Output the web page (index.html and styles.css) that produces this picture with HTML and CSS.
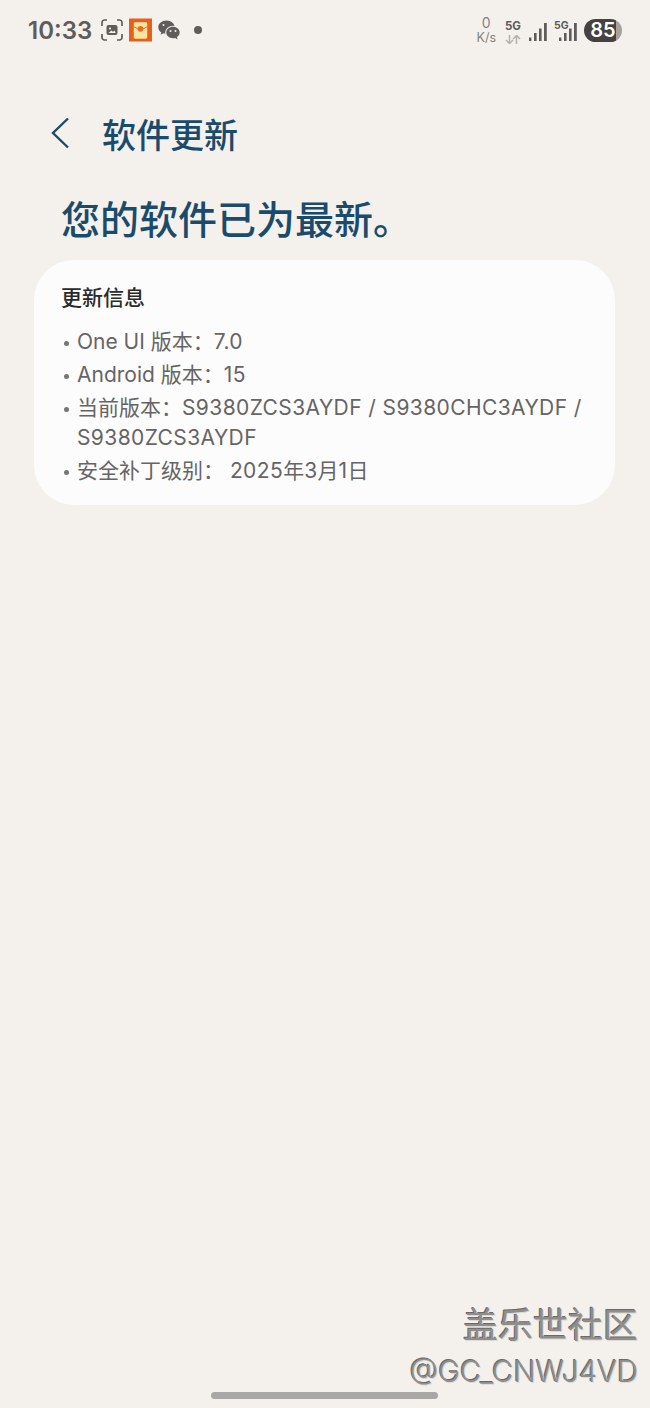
FILE: index.html
```html
<!DOCTYPE html>
<html lang="zh-CN">
<head>
    <meta charset="UTF-8">
    <meta name="viewport" content="width=device-width, initial-scale=1.0">
    <title>软件更新</title>
    <link rel="stylesheet" href="styles.css">
</head>
<body>
    <div class="status-bar">
        <span class="clock">10:33</span>
        <svg class="icon-shot" viewBox="0 0 22 22" width="22" height="22">
            <path d="M1 7V3.500A2.500 2.500 0 0 1 3.500 1H6M16 1h2.500A2.500 2.500 0 0 1 21 3.500V7M21 15v3.500a2.500 2.500 0 0 1-2.500 2.500H16M6 21H3.500A2.500 2.500 0 0 1 1 18.500V15" fill="none" stroke="#5f5c5a" stroke-width="1.700"/>
            <rect x="5.500" y="6" width="11" height="10" rx="2" fill="#5f5c5a"/>
            <circle cx="9" cy="9.500" r="1.100" fill="#f4f1ed"/>
            <path d="M7.500 14l2.800-2.600 1.700 1.400 1.500-1.200 1.200 2.400z" fill="#f4f1ed"/>
        </svg>
        <svg class="icon-packet" viewBox="0 0 24 24" width="23" height="24">
            <rect width="24" height="24" fill="#e4611c"/>
            <rect x="5" y="4" width="14" height="17" rx="1.500" fill="#fbe4a0"/>
            <path d="M5 8.500l7 4 7-4" fill="none" stroke="#d9672a" stroke-width="1"/>
            <circle cx="12" cy="10.800" r="3" fill="#e0702c"/>
        </svg>
        <svg class="icon-chat" viewBox="0 0 22 20" width="22" height="20">
            <path d="M8.500 0.500C3.900 0.500 0.300 3.500 0.300 7.200c0 2.100 1.200 4 3 5.200l-0.700 2.400 2.900-1.500c1 .3 2 .4 3 .4 4.600 0 8.200-3 8.200-6.500S13.100 0.500 8.500 0.500z" fill="#5f5c5a"/>
            <ellipse cx="15" cy="12.500" rx="7.800" ry="6.800" fill="#f4f1ed"/>
            <path d="M15 6.800c-3.700 0-6.700 2.500-6.700 5.700s3 5.700 6.700 5.700c.8 0 1.500-.1 2.200-.3l2.300 1.500-.5-2.400c1.700-1.100 2.700-2.700 2.700-4.500C21.700 9.300 18.700 6.800 15 6.800z" fill="#5f5c5a"/>
            <circle cx="5.500" cy="5" r="1" fill="#f4f1ed"/>
            <circle cx="12.500" cy="11" r="1" fill="#f4f1ed"/>
            <circle cx="17.500" cy="11" r="1" fill="#f4f1ed"/>
        </svg>
        <span class="dot"></span>
        <div class="status-right">
            <div class="speed"><span class="speed-val">0</span><span>K/s</span></div>
            <div class="net">
                <span>5G</span>
                <svg viewBox="0 0 16 9" width="16" height="9">
                    <path d="M4.500 0v8M1 5l3.500 3.500L8 5" fill="none" stroke="#b3b0ad" stroke-width="1.500"/>
                    <path d="M11.500 9V1M8 4l3.500-3.500L15 4" fill="none" stroke="#b3b0ad" stroke-width="1.500"/>
                </svg>
            </div>
            <svg class="signal" viewBox="0 0 18 18" width="18" height="18">
                <rect x="0" y="14.500" width="2.400" height="3.500" fill="#5f5c5a"/>
                <rect x="5" y="10" width="2.600" height="8" fill="#5f5c5a"/>
                <rect x="10" y="5.500" width="2.600" height="12.500" fill="#5f5c5a"/>
                <rect x="15" y="0" width="2.800" height="18" fill="#5f5c5a"/>
            </svg>
            <div class="signal-5g">
                <span>5G</span>
                <svg class="signal" viewBox="0 0 18 18" width="18" height="18">
                    <rect x="0" y="14.500" width="2.400" height="3.500" fill="#5f5c5a"/>
                    <rect x="5" y="10" width="2.600" height="8" fill="#5f5c5a"/>
                    <rect x="10" y="5.500" width="2.600" height="12.500" fill="#5f5c5a"/>
                    <rect x="15" y="0" width="2.800" height="18" fill="#5f5c5a"/>
                </svg>
            </div>
            <div class="battery">85</div>
        </div>
    </div>

    <div class="app-bar">
        <svg class="back" viewBox="0 0 20 32" width="20" height="32">
            <path d="M18 1.500L3 16l15 14.500" fill="none" stroke="#1b4b6b" stroke-width="2.400"/>
        </svg>
        <h2>软件更新</h2>
    </div>

    <h1>您的软件已为最新。</h1>

    <div class="card">
        <h3>更新信息</h3>
        <ul>
            <li>One UI 版本：<span class="en">7.0</span></li>
            <li>Android 版本：<span class="en">15</span></li>
            <li>当前版本：<span class="en">S9380ZCS3AYDF / </span><span class="en">S9380CHC3AYDF / </span><span class="en">S9380ZCS3AYDF</span></li>
            <li>安全补丁级别： <span class="en">2025</span>年<span class="en">3</span>月<span class="en">1</span>日</li>
        </ul>
    </div>

    <div class="watermark">
        <div class="wm-top">盖乐世社区</div>
        <div class="wm-user">@GC_CNWJ4VD</div>
    </div>
    <div class="home-bar"></div>
</body>
</html>
```

FILE: styles.css
```css
html, body { height: 100%; }
body {
    margin: 0;
    background: #f4f1ed;
    font-family: Inter, "Noto Sans CJK SC", sans-serif;
    position: relative;
    overflow: hidden;
}
.status-bar {
    display: flex;
    align-items: center;
    height: 60px;
    padding: 0 28px;
    box-sizing: border-box;
    color: #5f5c5a;
}
.clock { font-size: 24px; font-weight: 600; margin-right: 9px; }
.icon-shot { margin-right: 6px; }
.icon-chat { margin-left: 6px; }
.dot {
    width: 8px;
    height: 8px;
    border-radius: 50%;
    background: #5f5c5a;
    margin-left: 14px;
}
.status-right {
    margin-left: auto;
    display: flex;
    align-items: center;
}
.speed {
    display: flex;
    flex-direction: column;
    align-items: center;
    font-size: 12.5px;
    line-height: 15px;
    color: #858280;
    margin-right: 9px;
}
.speed-val { font-size: 14px; }
.net {
    display: flex;
    flex-direction: column;
    align-items: center;
    gap: 2px;
    margin: 3px 8px 0 0;
    font-size: 11.5px;
    font-weight: 700;
    line-height: 13px;
}
.signal { margin-top: 4px; }
.signal-5g { display: flex; align-items: flex-start; margin-left: 7px; }
.signal-5g span {
    width: 13px;
    margin: 1px -8px 0 0;
    font-size: 10.5px;
    font-weight: 700;
    line-height: 12px;
}
.battery {
    width: 38px;
    height: 23px;
    margin-left: 7px;
    border-radius: 12px;
    background: linear-gradient(90deg, #45423f 85%, #a5a3a0 85%);
    color: #fff;
    font-size: 20px;
    font-weight: 600;
    line-height: 23px;
    text-align: center;
}
.app-bar {
    display: flex;
    align-items: center;
    height: 50px;
    margin-top: 48px;
    padding-left: 50px;
}
.back { margin-right: 32px; }
h2 {
    margin: 0;
    font-size: 34px;
    font-weight: 500;
    color: #1b4b6b;
}
h1 {
    margin: 37px 0 0 61px;
    font-size: 39px;
    line-height: 50px;
    font-weight: 500;
    color: #1b4b6b;
}
.card {
    margin: 15px 35px 0 34px;
    padding: 24px 27px 19px;
    border-radius: 40px;
    background: #fcfcfc;
}
h3 {
    margin: 0 0 15px;
    font-size: 21px;
    line-height: 28px;
    font-weight: 500;
    color: #2a2a2a;
}
ul { margin: 0; padding: 0; list-style: none; }
li {
    position: relative;
    padding-left: 16px;
    font-size: 21px;
    line-height: 30px;
    color: #666464;
}
li + li { margin-top: 3px; }
li::before {
    content: "";
    position: absolute;
    left: 3px;
    top: 14px;
    width: 5px;
    height: 5px;
    border-radius: 50%;
    background: #777573;
}
.en { letter-spacing: 0.4px; }
.watermark {
    position: absolute;
    right: 12px;
    bottom: 14px;
    text-align: right;
    color: #8f8e8c;
    text-shadow: 1px 1px 0 #dcdad7, -1px -1px 0 #6b6a68;
}
.wm-top { font-size: 35px; line-height: 46px; font-weight: 400; }
.wm-user { margin-top: 2px; font-size: 29.3px; font-weight: 300; line-height: 44px; }
.home-bar {
    position: absolute;
    left: 211px;
    bottom: 9px;
    width: 227px;
    height: 7px;
    border-radius: 4px;
    background: #a9a7a5;
}
```
